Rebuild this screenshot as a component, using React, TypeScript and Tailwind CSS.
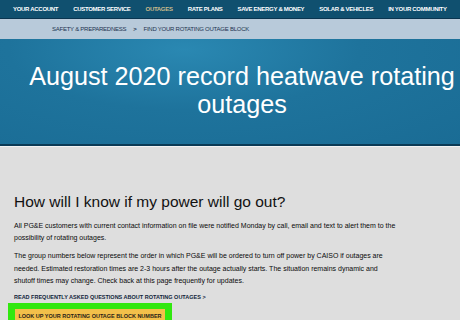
import React from 'react';

const navItems = [
  'YOUR ACCOUNT',
  'CUSTOMER SERVICE',
  'OUTAGES',
  'RATE PLANS',
  'SAVE ENERGY & MONEY',
  'SOLAR & VEHICLES',
  'IN YOUR COMMUNITY',
];

export default function App() {
  return (
    <div className="w-[460px] h-[320px] overflow-hidden bg-[#dedede] font-['Liberation_Sans',Arial,sans-serif]">
      {/* top nav */}
      <nav className="h-[19px] bg-[#10506f] border-b border-[#0a3550] flex items-center gap-[15px] pl-[13px]">
        {navItems.map((item) => (
          <span
            key={item}
            className={
              item === 'OUTAGES'
                ? 'text-[6px] font-bold tracking-[-0.3px] text-[#c9bb8c] whitespace-nowrap'
                : 'text-[6px] font-bold tracking-[-0.3px] text-white whitespace-nowrap'
            }
          >
            {item}
          </span>
        ))}
      </nav>

      {/* breadcrumb */}
      <div className="h-[20px] bg-[#b8cada] flex items-center pl-[52px] gap-[7px] text-[6px] tracking-[-0.25px] text-[#1c3350] whitespace-nowrap">
        <span>SAFETY &amp; PREPAREDNESS</span>
        <span className="font-bold">&gt;</span>
        <span>FIND YOUR ROTATING OUTAGE BLOCK</span>
      </div>

      {/* hero */}
      <div className="h-[107px] bg-[radial-gradient(ellipse_at_40%_10%,#2a88b2_0%,#1e739c_45%,#1a6c95_100%)] border-b-2 border-[#0b3a55] pt-[23px] pl-[24px]">
        <h1 className="text-center text-white text-[25.2px] leading-[28px] font-normal">
          August 2020 record heatwave rotating outages
        </h1>
      </div>
      <div className="h-px bg-[#f2f2f2]" />

      {/* content */}
      <div className="px-[14px] pt-[46px]">
        <h2 className="text-[15.5px] leading-[18px] text-[#111]">How will I know if my power will go out?</h2>
        <p className="mt-[9px] w-[383px] text-[7px] leading-[12.4px] text-[#0a0a0a]">
          All PG&amp;E customers with current contact information on file were notified Monday by call, email and text to alert them to the possibility of rotating outages.
        </p>
        <p className="mt-[5.5px] w-[383px] text-[7px] leading-[12.4px] text-[#0a0a0a]">
          The group numbers below represent the order in which PG&amp;E will be ordered to turn off power by CAISO if outages are needed. Estimated restoration times are 2-3 hours after the outage actually starts. The situation remains dynamic and shutoff times may change. Check back at this page frequently for updates.
        </p>
        <div className="mt-[4px] text-[5.5px] leading-[10px] font-bold text-[#10243a] whitespace-nowrap">
          READ FREQUENTLY ASKED QUESTIONS ABOUT ROTATING OUTAGES &gt;
        </div>
        <div className="-ml-[6px] mt-[1px] w-[164px] bg-[#31e80f] pt-[6px] px-[7px]">
          <div className="bg-[#f3c04a] h-[20px] flex items-start pt-[4px] justify-center text-[5.5px] leading-[7px] font-bold text-[#2a2218] whitespace-nowrap">
            LOOK UP YOUR ROTATING OUTAGE BLOCK NUMBER
          </div>
        </div>
      </div>
    </div>
  );
}
